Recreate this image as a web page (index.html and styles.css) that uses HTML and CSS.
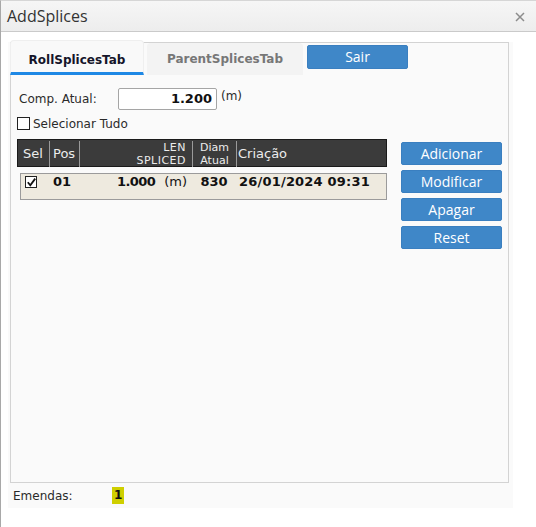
FILE: index.html
```html
<!DOCTYPE html>
<html lang="pt">
<head>
<meta charset="utf-8">
<title>AddSplices</title>
<link rel="stylesheet" href="styles.css">
</head>
<body>
<div class="window">
  <div class="titlebar">
    <span class="title">AddSplices</span>
    <svg class="close" width="10" height="10" viewBox="0 0 10 10" aria-hidden="true"><path d="M1 1L9 9M9 1L1 9" stroke="#8c8c8c" stroke-width="1.5" fill="none"/></svg>
  </div>
  <div class="body">
    <div class="frame">
      <div class="panel">
        <div class="tabs">
          <div class="tab active">RollSplicesTab</div>
          <div class="tab">ParentSplicesTab</div>
          <button class="btn sair">Sair</button>
        </div>
        <div class="content">
          <div class="main">
            <div class="field-row">
              <span class="lbl">Comp. Atual:</span>
              <div class="input">1.200</div>
              <span class="unit">(m)</span>
            </div>
            <div class="check-row"><span class="cb"></span><span>Selecionar Tudo</span></div>
            <div class="grid-head">
              <div class="hc sel">Sel</div>
              <div class="hc pos">Pos</div>
              <div class="hc len two"><span>LEN</span><span>SPLICED</span></div>
              <div class="hc diam two"><span>Diam</span><span>Atual</span></div>
              <div class="hc cri">Criação</div>
            </div>
            <div class="grid-row">
              <div class="dc sel"><span class="cb checked"><svg width="11" height="11" viewBox="0 0 11 11" aria-hidden="true"><path d="M1.8 5.2L4.3 8.3L9.2 1.6" stroke="#111" stroke-width="1.8" fill="none"/></svg></span></div>
              <div class="dc pos">01</div>
              <div class="dc len"><b>1.000</b><span class="u">(m)</span></div>
              <div class="dc diam">830</div>
              <div class="dc cri">26/01/2024 09:31</div>
            </div>
          </div>
          <div class="actions">
            <button class="btn">Adicionar</button>
            <button class="btn">Modificar</button>
            <button class="btn">Apagar</button>
            <button class="btn">Reset</button>
          </div>
        </div>
      </div>
      <div class="status"><span class="lbl">Emendas:</span><span class="count">1</span></div>
    </div>
  </div>
</div>
</body>
</html>
```
FILE: styles.css
```css
* { box-sizing: border-box; }
html, body { margin: 0; padding: 0; background: #fff; }
body { font-family: "DejaVu Sans", Verdana, sans-serif; font-size: 12px; color: #2a2a2a; }

.window {
  height: 527px;
  border-left: 1px solid #a8a8a8;
  border-top: 1px solid #d6d6d6;
  background: #fff;
}
.titlebar {
  height: 31px;
  border-bottom: 1px solid #cacaca;
  background: linear-gradient(#f6f6f6, #ededed);
  display: flex;
  align-items: center;
  justify-content: space-between;
  padding: 0 11px 0 6px;
}
.title {
  font-family: "Open Sans", sans-serif;
  font-size: 16px;
  color: #333;
  line-height: 30px;
}
.close { display: block; margin-top: 2px; }

.body { padding: 10px 0 0 7px; }
.frame {
  width: 505px;
  padding: 0 4px 0 2px;
  background: #fafafa;
}
.panel {
  height: 441px;
  border: 1px solid #d3d3d3;
  background: #fafafa;
}
.tabs {
  display: flex;
  align-items: flex-end;
  height: 35px;
  margin: -3px 0 0 -1px;
}
.tab {
  height: 32px;
  padding-top: 9px;
  line-height: 14px;
  font-weight: bold;
  font-size: 12px;
  text-align: center;
  color: #777;
  background: #f3f3f3;
  border-radius: 4px 4px 0 0;
  width: 156px;
  margin-left: 3px;
}
.tab.active {
  height: 35px;
  padding-top: 12px;
  width: 134px;
  margin-left: 0;
  color: #15152a;
  background: #f9f9f9;
  border: 1px solid #efefef;
  border-bottom: 3px solid #1e88e5;
}
.btn {
  display: block;
  width: 101px;
  height: 23px;
  padding: 0;
  border: 1px solid #3a7fc0;
  border-radius: 2px;
  background: #3f87c8;
  color: #fff;
  font-family: "Open Sans", sans-serif;
  font-size: 14px;
  line-height: 20px;
  text-align: center;
}
.btn.sair {
  height: 24px;
  margin: 0 0 6px 4px;
}

.content { display: flex; padding-left: 6px; }
.main { width: 370px; }

.field-row {
  display: flex;
  align-items: center;
  height: 22px;
  margin-top: 13px;
}
.field-row .lbl { width: 101px; padding-left: 2px; }
.input {
  width: 99px;
  height: 22px;
  border: 1px solid #a5a5a5;
  border-radius: 2px;
  background: #fff;
  font-weight: bold;
  font-size: 13px;
  color: #111;
  text-align: right;
  padding-right: 4px;
  line-height: 20px;
}
.unit { margin-left: 4px; align-self: flex-start; line-height: 14px; margin-top: 1px; }

.check-row {
  display: flex;
  align-items: center;
  height: 13px;
  margin-top: 7px;
}
.cb {
  display: inline-block;
  width: 13px;
  height: 13px;
  border: 1px solid #222;
  background: #fff;
  margin-right: 3px;
}
.cb svg { display: block; margin: 0; }

.grid-head {
  display: grid;
  grid-template-columns: 31px 30px 113px 44px 1fr;
  height: 28px;
  margin-top: 9px;
  background: #3b3b3b;
  border: 1px solid #1a1a1a;
  color: #ececec;
  font-size: 13px;
}
.hc {
  display: flex;
  align-items: center;
  line-height: 14px;
  margin: 1px 0;
  border-left: 1px solid #9a9a9a;
}
.hc.two {
  flex-direction: column;
  justify-content: center;
  font-size: 11px;
  line-height: 13px;
}
.hc.two span { display: block; }
.hc.sel { border-left: none; padding-left: 5px; }
.hc.pos { padding-left: 3px; }
.hc.len { align-items: flex-end; padding-right: 6px; }
.hc.len span { letter-spacing: 0.5px; }
.hc.diam { align-items: center; }
.hc.cri { padding-left: 1px; }

.grid-row {
  display: grid;
  grid-template-columns: 28px 30px 113px 44px 1fr;
  height: 27px;
  margin: 6px 0 0 3px;
  background: #eeeadf;
  border: 1px solid #9b9b9b;
  font-size: 13px;
  font-weight: bold;
  color: #111;
  line-height: 15px;
}
.dc.sel { padding: 2px 0 0 4px; }
.dc.sel .cb { width: 12px; height: 12px; }
.dc.pos { padding-left: 4px; }
.dc.len { display: flex; justify-content: flex-end; padding-right: 5px; }
.dc.len b { letter-spacing: -0.6px; }
.dc.len .u { font-weight: normal; margin-left: 9px; }
.dc.diam { text-align: center; }
.dc.cri { padding-left: 3px; letter-spacing: 0.2px; }

.actions {
  display: flex;
  flex-direction: column;
  gap: 5px;
  margin: 67px 0 0 14px;
}

.status {
  height: 25px;
  line-height: 24px;
  padding-left: 3px;
  display: flex;
  align-items: center;
}
.status .lbl { width: 99px; }
.count {
  display: inline-block;
  height: 17px;
  line-height: 17px;
  padding: 0 2px;
  background: #cfcf00;
  color: #111;
  font-weight: bold;
}
```
